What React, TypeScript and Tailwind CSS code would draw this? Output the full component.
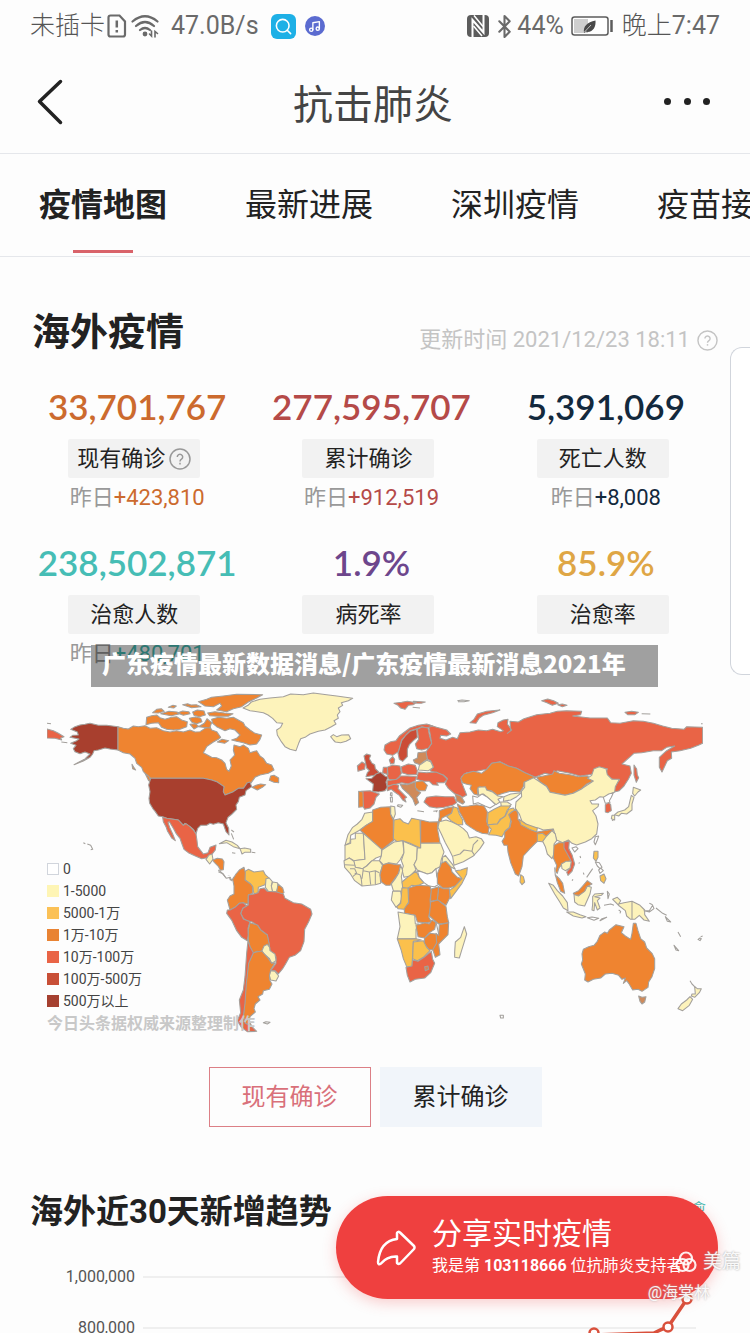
import type { ReactNode } from "react";
import { Bluetooth, Music, Search } from "lucide-react";

const stats = [
  { value: "33,701,767", label: "现有确诊", delta: "+423,810", color: "text-[#cc6a2e]", help: true },
  { value: "277,595,707", label: "累计确诊", delta: "+912,519", color: "text-[#b54a48]" },
  { value: "5,391,069", label: "死亡人数", delta: "+8,008", color: "text-[#13293d]" },
  { value: "238,502,871", label: "治愈人数", delta: "+480,701", color: "text-[#46bdb5]" },
  { value: "1.9%", label: "病死率", color: "text-[#6d468c]" },
  { value: "85.9%", label: "治愈率", color: "text-[#dfa645]" },
];

const tabs = ["疫情地图", "最新进展", "深圳疫情", "疫苗接种"];

const legend = [
  { label: "0", color: "bg-white border border-gray-300" },
  { label: "1-5000", color: "bg-[#fef5b5]" },
  { label: "5000-1万", color: "bg-[#fbc156]" },
  { label: "1万-10万", color: "bg-[#e98333]" },
  { label: "10万-100万", color: "bg-[#e96446]" },
  { label: "100万-500万", color: "bg-[#c84f37]" },
  { label: "500万以上", color: "bg-[#a54030]" },
];

const W = "#ffffff";
const Y = "#fdf3bb";
const G = "#fbc04c";
const O = "#ef8430";
const R = "#e96446";
const D = "#cb4c36";
const B = "#a83f2e";
const T = "#cf8a5a";

type Shape = [string, string];

const northAmerica: Shape[] = [
  [B, "M122 148L135 140 150 135 165 133 180 130 205 136 230 136 264 140V210L240 207 225 204 205 210 192 212 188 222 180 232 160 243 132 254 165 237 180 222 165 216 150 221 135 215 130 206 138 196 122 190 140 182 147 177 120 172 128 166 145 165 142 156Z"],
  [R, "M51 147L70 152 85 160 102 170 92 174 95 180 75 175 51 174Z"],
  [O, "M264 140L280 145 295 147 310 138 325 140 345 137 360 145 380 143 400 152 420 156 440 152 460 156 480 150 495 156 510 155 525 145 540 140 545 150 560 155 572 172 565 178 550 186 530 200 520 218 545 232 560 233 575 240 585 250 590 268 597 274 604 258 600 240 614 225 610 210 612 195 630 200 640 195 655 205 660 218 680 212 690 228 700 235 710 250 725 255 732 270 715 280 690 285 675 292 662 310 640 325 625 325 610 335 585 345 578 335 582 320 560 305 545 300 520 295H362L340 275 335 262 320 250 315 235 300 222 280 218 264 210Z"],
  [O, "M545 118L565 112 590 115 610 112 640 128 645 138 660 150 675 160 695 165 690 178 680 192 660 195 640 188 620 184 605 180 620 175 630 165 615 150 600 146 585 152 560 140 548 130Z"],
  [O, "M505 65L530 58 545 52 580 48 620 43 698 44 680 54 655 66 635 80 610 86 590 95 560 90 575 78 570 70 550 80 525 78Z"],
  [O, "M350 112L365 107 380 105 390 113 405 118 425 112 440 110 455 120 472 125 470 140 450 148 430 150 410 148 395 142 385 128 365 130 348 134Z"],
  [O, "M368 98l12-10 14-2 9 8-18 5z M392 101l25-7 24 2 10 5-28 6z M415 82l14-6 10 2-8 6z M458 74l15-3 10 4 16-1 14 6-28 3z M442 99l16-6 18 2 4 6-20 5z M488 96l14-6 20 3 4 12-18 5-16-4z M478 115l18-4 16 4 4 10-16 6-14-4z M533 99l22-4 28 4 26 2-14 8-32 0-24-2z M480 133l16-2 10 8-14 8z M505 140l18-10 8-14 14 12-6 16z M562 186l14-8 20 4-12 8z"],
  [O, "M722 288l10-2 14 8 0 14-14-1-14-6z M666 322l12-6 14-4 15 2-10 8-15 8z M345 280l12 10 7 14-8-2z M306 253l6 10 5 7-9-4z"],
  [B, "M362 295H520L545 300 560 305 582 320 580 335 585 345 610 335 625 325 640 325 652 308 660 306 665 320 648 332 645 345 628 352 625 365 618 375 620 388 606 402 594 412 588 428 596 445 597 465 588 455 580 432 565 428 550 433 540 430 530 436 512 436 503 445 498 462 490 448 480 440 465 430 460 436 445 420 410 415 398 410 385 408 376 395 368 385 359 370 357 355 360 335 356 315Z"],
  [R, "M398 412L410 415 445 420 460 436 468 431 480 440 490 450 498 462 501 482 503 500 520 522 534 518 540 502 558 495 556 510 545 524 538 533 528 534 515 536 496 528 475 518 462 508 456 492 450 475 438 460 430 445 418 425 414 427 420 445 428 462 436 482 425 474 412 452 408 440 400 425Z"],
  [Y, "M528 538l8-12 10-4 3 16-10 14z"],
  [O, "M548 540l14-5 15 2 5 8-2 24-9 2-6-12-12-12z"],
  [W, "M565 570l10 8 10 12 12-2 4 12 10-8 10 4"],
  [Y, "M568 491l20-10 18 5 16 10 8 10-20-6-20-12z M630 506l14-2 18 4 0 9-18 0-8 5z"],
  [W, "M606 518l10 2 M665 517l11 1 M604 450l8 6 M604 460l7 18 M160 488l6 3 M172 492l10 4 6 12-6 1 M51 130l12 1 M94 186l18 2"],
];

const southAmerica: Shape[] = [
  [W, "M565 65l14 6 10 14 12-3 4 10 8-10 6 4"],
  [G, "M642 66L655 58 672 66 700 62 706 74 718 85 708 92 705 104 685 112 684 128 672 132 668 110 660 102 645 90Z"],
  [O, "M642 52L646 68 645 90 662 102 668 110 668 130 655 135 654 163 640 158 628 160 615 172 600 180 596 165 592 150 600 138 612 132 612 108 608 88 618 72 628 60Z"],
  [Y, "M708 86L718 84 727 95 724 106 728 125 715 124 706 112Z"],
  [Y, "M728 96L742 98 745 106 740 124 728 125 724 108Z"],
  [O, "M744 102l14 12 4 14-10 6-12-8z"],
  [R, "M655 135L672 132 684 128 690 116 702 114 712 124 740 126 760 132 765 145 790 158 815 162 842 178 846 192 836 215 824 238 822 275 812 302 795 316 778 322 768 340 758 356 745 372 735 362 722 362 738 340 738 320 720 300 718 285 712 255 692 240 685 228 665 215 650 212 640 205 632 190 640 172 655 165Z"],
  [R, "M600 180L615 172 628 160 640 158 650 168 638 175 632 190 640 207 660 215 654 235 655 255 652 272 635 262 620 242 606 212 590 190 592 180Z"],
  [O, "M660 218L682 225 692 240 712 255 718 285 702 290 695 305 680 304 670 310 660 290 655 272 655 240Z"],
  [Y, "M702 288L712 283 719 292 720 302 735 312 738 332 725 340 718 325 702 312 696 302Z"],
  [Y, "M722 362L735 364 746 378 738 393 722 390 718 376Z"],
  [O, "M670 308L695 303 715 325 725 340 735 338 722 360 718 378 720 392 726 402 718 418 700 422 698 432 684 440 690 450 676 462 672 476 676 486 660 500 658 514 664 526 648 522 640 500 644 460 648 400 655 340Z"],
  [R, "M654 272L660 290 670 308 656 340 649 400 645 460 640 500 646 520 664 528 680 544 652 545 634 532 622 512 632 488 628 450 640 420 645 380 650 310Z"],
  [W, "M700 518l8-3 12 2-8 5z"],
];

const eurasia: Shape[] = [
  [Y, "M-81 84L-66 76-56 66-30 58 0 54 40 50 62 42 100 44 130 39 170 44 200 48 248 55 235 62 214 68 218 76 205 84 210 95 202 105 205 115 192 122 198 132 184 140 165 150 145 154 120 162 105 172 92 176 86 190 78 212 60 208 45 200 34 185 22 165 20 150 32 142 38 130 20 128 8 115-6 105-20 98-60 92Z"],
  [Y, "M182 170L190 164 200 170 215 165 236 164 242 176 228 184 212 188 196 186 190 180Z"],
  [R, "M372 70L395 67 412 64 440 68 430 74 415 76 405 88 392 84 384 76Z M430 64l36 2-12 4-24-1z"],
  [R, "M600 128L612 118 622 102 650 94 690 90 668 98 640 106 628 114 618 130Z"],
  [R, "M475 134L500 142 530 150 542 162 530 168 512 166 510 175 528 180 548 172 562 176 570 158 600 156 625 150 650 152 668 148 692 155 700 152 682 140 684 128 700 120 714 118 712 132 725 150 712 160 722 152 720 124 745 126 762 116 800 104 840 100 862 94 890 92 935 94 932 104 908 108 960 114 1012 114 1022 128 1050 130 1090 122 1120 124 1150 130 1178 138 1205 145 1242 148 1250 140 1298 142V190L1285 196 1262 205 1230 212 1204 216 1205 235 1192 242 1176 276 1168 262 1168 232 1190 212 1214 198 1190 202 1175 212 1150 212 1115 218 1092 220 1075 235 1056 252 1080 258 1084 280 1075 298 1062 318 1048 332 1033 336 1030 325 1048 300 1028 298 1008 285 1012 266 985 262 975 280 958 284 930 288 900 280 862 272 845 284 825 280 795 292 765 278 740 265 715 258 690 245 665 250 650 268 620 274 590 278 575 290 574 305 590 345 578 352 555 342 535 325 526 312 532 295 520 285 498 278 480 272 490 260 482 242 472 238 468 216 485 190 480 160Z"],
  [R, "M1092 255l8 12 2 18 4 8-7 14-7-22z M815 62l18-5 18 5 14 8-18 6-16-8z M863 74l14-2 14 4-14 4z M1065 97l20-3 20 3-10 7-22 0z"],
  [W, "M1115 101l26 1 M1293 131l5 0 M562 62l14-2 22 2-16 3-18 0 M428 82l22 2"],
  [R, "M345 195L362 185 378 182 388 168 404 156 420 144 445 136 470 132 488 138 470 144 456 140 440 146 420 152 408 165 395 180 390 200 385 215 368 226 350 222 342 210Z"],
  [D, "M408 165L420 154 440 148 442 172 430 182 418 194 412 208 412 230 398 244 388 238 384 220 390 200 395 182Z"],
  [R, "M442 148L456 141 474 144 478 165 485 190 475 205 455 210 440 206 436 192 446 178Z"],
  [T, "M444 218L468 215 472 238 462 244 450 254 434 248 430 240 442 234Z"],
  [Y, "M448 256L470 241 482 245 490 262 475 272 445 270Z"],
  [D, "M282 228l8-6 12 4-4 10 8 14 8 4 2 12 10 10-4 8-34 6 4-12 6-6-8-8z"],
  [R, "M262 258l14-12 10 6-2 16-20 6z"],
  [B, "M288 296L305 295 318 282 332 277 345 288 354 292 348 306 352 322 345 332 325 336 308 334 310 312Z"],
  [R, "M272 334L300 332 328 342 318 352 312 372 300 384 284 388 280 380Z"],
  [O, "M266 334L279 336 280 380 266 382Z"],
  [R, "M352 262L368 255 390 258 394 280 388 290 378 300 356 298 352 288Z M340 262l12 0 2 22-16-6z"],
  [R, "M394 260L415 252 436 256 442 272 440 284 415 284 396 278Z"],
  [R, "M445 276L470 278 498 276 520 286 532 298 522 308 500 308 505 316 488 314 478 304 458 304 440 298Z"],
  [R, "M352 302L380 298 392 288 412 288 440 290 436 302 415 312 395 308 372 314 352 318Z"],
  [R, "M352 320L372 313 386 316 384 326 396 338 410 352 404 356 408 366 398 360 388 346 374 336 364 328 352 332Z"],
  [T, "M390 312L412 314 436 306 440 330 452 338 440 352 446 368 436 376 428 356 416 342 398 326Z"],
  [O, "M436 306L458 302 472 316 466 332 446 332 436 322Z"],
  [R, "M462 366L470 352 498 348 525 350 552 350 560 368 548 376 522 382 500 384 478 380Z"],
  [T, "M556 342L572 348 584 366 578 372 560 362Z"],
  [R, "M358 240l10-10 6 8-2 12-10 2z"],
  [W, "M362 338l4 0 0 10-5-2z M361 352l6 0 0 14-5 0z M384 374l14 2-6 6-10-4z M442 392l20 3 M490 394l12-2-4 4"],
  [O, "M572 295L582 282 610 274 635 280 650 268 665 250 690 246 715 258 740 265 765 278 796 292 780 305 762 306 760 320 750 336 720 334 700 340 682 346 664 332 648 330 630 320 622 328 624 346 612 342 600 326 604 316 588 312 578 308Z"],
  [Y, "M624 322L646 320 650 330 668 336 684 348 700 350 684 358 690 366 678 374 664 362 650 350 640 342 626 346Z"],
  [Y, "M702 350L722 342 755 338 740 350 722 360 700 364Z"],
  [W, "M608 348L622 352 636 342 650 350 664 362 676 374 660 384 645 378 624 368 610 372Z"],
  [Y, "M692 366l20 0 12 8-8 6-22 0z"],
  [O, "M562 372L575 380 596 378 620 374 642 378 652 396 650 425 658 440 654 462 636 460 618 452 602 442 588 432 578 412 568 395Z"],
  [G, "M654 398L672 388 692 378 722 378 712 390 704 410 690 418 682 432 652 434Z"],
  [G, "M652 434L682 432 692 418 706 408 716 388 730 384 742 402 722 422 718 442 706 452 696 470 678 466 656 464 664 448Z"],
  [G, "M530 410L545 398 550 380 562 384 568 402 578 420 578 434 562 434 545 424Z"],
  [O, "M508 392l22-8 20-4-6 20-28 14-6 20-6-2 4-22z"],
  [Y, "M508 425L528 420 546 426 566 436 580 446 592 458 598 474 618 470 634 476 642 488 630 506 610 528 580 545 552 556 548 530 538 510 526 488 514 462 504 442Z"],
  ["none", "M550 528l20-6 12-12 24 4 4-20 14-14 M606 514l8 12"],
];

const africa: Shape[] = [
  [Y, "M104-20L128-24 128 4 108 16 90 30 62 46 60 68 45 76 54 44 68 22 82 12 96-2Z"],
  [O, "M128-30L152-38 180-40 182-18 190 0 190 52 192 60 155 90 90 30 108 16 128 4Z"],
  [Y, "M182-42L194-40 196-18 190-2 182-18Z"],
  [G, "M192 0L210-4 220 6 235 12 245-5 270 0 272 85 240 70 218 62 202 66 190 56Z"],
  [O, "M272 0L298 6 325 5 322 24 330 68 272 70Z"],
  [Y, "M45 76L62 70 62 58 76 56 76 40 100 40 105 118 72 122 58 114 45 122Z"],
  [Y, "M100 40L155 88 154 108 138 114 122 126 110 138 98 146 76 142 70 122 105 118Z"],
  [Y, "M156 90L192 66 218 62 222 98 210 120 200 132 176 128 160 134 148 122 154 108Z"],
  [Y, "M220 64L262 82 260 120 252 134 258 150 240 168 222 172 216 150 220 138 214 122 222 98Z"],
  [Y, "M272 70H332L342 96 334 118 330 140 318 146 306 158 292 162 276 156 262 150 252 134 260 118 262 84H272Z"],
  [Y, "M42 122L58 114 72 124 76 142 98 146 110 138 126 122 148 122 158 136 150 160 152 190 136 194 96 198 74 182 60 160 44 142Z"],
  ["none", "M44 134l30 2 M60 146l14 0 6 14-12 10 M74 160l16 4 4 14 2 20 M100 146l-4 30 M100 152l18 4 4 38 M118 156l18-4 0 42 M136 152l12 6"],
  [O, "M158 134L176 130 200 134 212 134 206 160 194 176 180 196 168 196 154 186 150 165Z"],
  [Y, "M212 136L218 152 214 170 218 196 216 214 190 212 184 192 196 176 206 160Z"],
  [G, "M216 186L232 172 258 154 268 172 282 188 262 198 245 196 232 206 218 202Z"],
  [W, "M262 152L276 156 292 162 306 158 318 146 320 168 328 192 314 200 296 198 282 188 268 172Z"],
  [O, "M334 130L346 122 362 140 366 156 382 172 396 176 376 198 356 204 338 204 322 190 322 162Z"],
  [Y, "M338 112L346 106 368 134 376 148 362 140 348 124 336 128Z"],
  [G, "M376 152L392 150 412 143 410 162 396 190 380 212 362 236 358 212 376 198 396 176Z"],
  [O, "M326 200L340 206 358 206 360 232 348 256 322 240Z"],
  [O, "M302 208L326 200 322 240 302 244Z"],
  [O, "M236 204L262 196 300 198 304 212 300 240 302 262 296 290 304 306 286 308 262 306 256 286 224 280 222 262 236 250Z"],
  [Y, "M188 214L212 214 216 236 210 250 198 262 184 240Z"],
  [G, "M216 204L234 204 236 246 222 268 204 266 200 260 212 250Z"],
  [Y, "M204 276L224 280 254 286 256 312 266 312 258 328 258 356 202 356 210 320Z"],
  [O, "M258 316L286 308 298 312 306 300 318 308 314 328 298 338 284 354 264 350Z"],
  [O, "M302 246L324 240 348 260 352 290 356 308 326 312 312 300 298 288Z"],
  [O, "M328 314L356 308 354 344 336 362 326 372 330 404 316 412 308 388 320 368 318 340 326 346Z"],
  [O, "M284 354L300 340 318 342 320 368 308 390 296 388 282 370Z"],
  [G, "M202 357L258 356 274 360 250 364 246 440 230 440 220 416 214 392Z"],
  [G, "M250 366L280 362 290 382 300 392 280 412 262 422 248 416Z"],
  [R, "M228 442L246 438 248 420 264 424 282 412 304 394 308 418 314 430 302 458 284 474 256 478 240 486 232 466Z"],
  [T, "M284 440l10-2 2 10-10 4z"],
  [Y, "M403 320L410 342 404 362 394 394 388 414 374 412 374 396 376 366 392 352Z"],
  ["none", "M318 306l8 36"],
  [W, "M510 586l10 0 0 8-8 0z"],
];

const asia: Shape[] = [
  [O, "M140 292L160 288 188 282 192 272 208 280 240 284 265 290 292 288 310 303 290 312 275 326 248 340 225 345 180 336 170 318 150 306Z"],
  [Y, "M130 293L150 306 170 320 180 337 225 346 250 340 276 326 310 303 292 295 305 286 312 266 328 260 348 266 352 284 366 298 388 298 376 320 374 336 355 345 342 352 330 350 316 360 300 362 306 372 326 372 324 380 308 392 318 408 324 432 320 462 305 476 286 486 260 495 246 490 235 480 218 488 200 480 195 464 190 447 160 450 145 444 120 440 96 424 88 402 76 385 78 366 95 350 94 334 104 322 104 306Z"],
  [W, "M340 352l16-10 14-4-6 14-6 10 2 6-14 2z"],
  [R, "M346 374l10-6 6 6 2 18-10 6-8-2z"],
  [Y, "M430 322l12 4 10 4-8 6-10 12-6-8z M424 346l8 6-6 20 0 18-16 12-16-2-8 8-12-4 10-8 20-6 12-10 4-18z M366 406l8 0 0 14-10-4z"],
  [O, "M65 396L78 388 84 402 84 418 96 430 118 446 142 456 162 452 190 448 186 458 172 466 168 482 154 476 138 488 120 506 100 528 96 560 86 588 76 582 62 548 54 516 52 496 42 496 36 484 44 472 44 456 60 442 64 424 56 404Z"],
  [G, "M88 418L108 432 142 444 140 456 118 448 92 434Z M142 462l16-2 12 10-6 16-22-2z M92 584l8 6 4 16-8 8-6-8z"],
  [Y, "M186 452L196 462 200 482 192 492 196 512 186 536 172 522 166 500 158 484 170 468Z"],
  [O, "M192 496L206 488 220 488 236 482 234 500 242 520 246 540 216 552 206 566 202 580 196 574 200 556 190 534Z"],
  [R, "M222 486L238 484 236 506 246 524 254 552 246 574 234 586 230 576 242 562 242 540 230 518 222 504Z"],
  [Y, "M214 552l14-8 16 0-4 20-14 8-10-6z"],
  [W, "M246 504l12-4 6 6-10 10z M316 470l10-2-4 12-6 14-4-8z"],
];

const oceania: Shape[] = [
  [O, "M136 164L148 176 158 190 164 220 152 214 142 188Z"],
  [W, "M134 142l2 24 4 4 M210 108l2 6 M206 130l3-2 M220 158l2 6 M186 182l3-4"],
  [Y, "M116 190L130 196 142 212 158 228 172 248 174 272 160 264 148 244 134 222Z"],
  [Y, "M170 276L190 276 210 284 228 290 216 294 190 288Z"],
  [Y, "M192 222L205 228 226 210 232 198 244 202 240 222 232 240 224 258 204 254 194 246Z"],
  [O, "M190 220L206 212 218 198 232 182 246 192 230 200 224 214 206 226 194 224Z"],
  [Y, "M248 230l6-8 26-2-6 6-20 4 16 4-8 8 8 22-8 6-8-22-2 24-6-2 2-18z"],
  [Y, "M308 238L322 232 332 242 326 252 342 248 366 244 390 256 404 270 404 284 418 304 402 300 388 286 374 298 362 298 350 288 346 272 328 258Z"],
  ["none", "M366 244V298"],
  [G, "M252 94l12 0 0 18-6 12-8-10z M270 168l12-6 6 14-6 14-10-8z"],
  [W, "M256 126l12 2 8 14-6 4-8-8z M266 150l6-6 8 8-10 8z M230 172l18-26 M232 293l14-2 20 4-14 6z M270 302l20-10-14 4z M282 256l20-4 10 4 M292 214l6 8-4 14z M326 270l6 4-2 6 M402 272l16 0 10-16 4 10-14 10z M418 250l10 4 M438 264l20 16 12 6 M466 290l16 16-10-2z M504 336l8 14 M492 376l14 16-8-2z M564 358l6-4 4 2-4 6z M572 350l6-2"],
  [O, "M220 388L236 380 252 376 262 364 270 346 284 336 292 340 298 330 318 314 342 320 334 338 346 348 362 358 366 340 370 310 378 310 384 332 392 356 404 366 410 384 426 400 434 416 434 446 426 470 416 486 414 502 396 514 384 508 368 510 356 490 350 482 340 490 346 474 336 478 326 466 306 460 286 462 272 474 250 478 234 486 224 480 226 462 214 432 218 420 216 402Z"],
  [T, "M386 528l10 4 12-2-4 16-8 6-6-8z"],
  [Y, "M554 500l8 6 12 0-6 12-14 14-10-4 2-6 10 0z M540 530l8 8-10 18-20 16-14-6 10-14 16-12z"],
  [W, "M540 482l6 10 10 10 M306 0l4 2"],
];

function Region({ x, y, shapes }: { x: number; y: number; shapes: Shape[] }) {
  return (
    <g transform={`translate(${x} ${y}) scale(0.33333)`} stroke="#a3a09c" strokeWidth="3.2" strokeLinejoin="round">
      {shapes.map(([fill, d]) => (
        <path key={d} d={d} fill={fill} />
      ))}
    </g>
  );
}

function WorldMap() {
  return (
    <svg viewBox="47 690 656 346" className="block w-full" role="img" aria-label="海外疫情地图">
      <Region x={30} y={680} shapes={northAmerica} />
      <Region x={30} y={850} shapes={southAmerica} />
      <Region x={330} y={820} shapes={africa} />
      <Region x={270} y={680} shapes={eurasia} />
      <Region x={490} y={680} shapes={asia} />
      <Region x={510} y={820} shapes={oceania} />
    </svg>
  );
}

function HelpIcon({ className }: { className: string }) {
  return (
    <svg viewBox="0 0 22 22" className={className} fill="none" stroke="currentColor" strokeWidth="1.5">
      <circle cx="11" cy="11" r="10" />
      <path d="M8.3 9a2.7 2.7 0 1 1 4.2 2.2c-.9.6-1.5 1.1-1.5 2.2" />
      <path d="M11 14.8v1.6" />
    </svg>
  );
}

function StatusBar() {
  return (
    <div className="flex h-[52px] items-center justify-between px-[30px] text-[25px] leading-[52px] text-[#6a6a6a]">
      <div className="flex items-center">
        <span className="font-light text-[#555]">未插卡</span>
        <svg viewBox="0 0 20 24" className="ml-[2px] h-6 w-5" fill="none" stroke="currentColor" strokeWidth="2.2">
          <path d="M3.5 1.5h9l5.5 6v13q0 2-2 2H3.5q-2 0-2-2V3.5q0-2 2-2Z" />
          <path d="M9.8 6.5v7M9.8 16v2.5" strokeWidth="2.5" />
        </svg>
        <svg viewBox="0 0 28 24" className="ml-1 h-6 w-7" fill="none" stroke="currentColor" strokeWidth="2.2" strokeLinecap="round">
          <path d="M1.5 7.5Q14-3 26.5 7.5M5 12q9-8 18 0M9 16q5-4 10 0" />
          <circle cx="14" cy="20" r="1.3" fill="currentColor" />
          <path d="M20.5 17v5l-2-2M24 23v-5.5l2.5 2" strokeWidth="1.6" />
        </svg>
        <span className="ml-3">47.0B/s</span>
        <span className="ml-3 flex h-[25px] w-[25px] items-center justify-center rounded-md bg-[#1eb0e6] text-white">
          <Search size={19} strokeWidth={2} />
        </span>
        <span className="ml-[9px] flex h-5 w-5 items-center justify-center rounded-full bg-[#5b6bd0] text-white">
          <Music size={13} strokeWidth={2.5} />
        </span>
      </div>
      <div className="flex items-center">
        <svg viewBox="0 0 24 24" className="h-6 w-6">
          <rect x="1" y="1" width="22" height="22" rx="4" fill="#5c5c5c" />
          <path d="M6.5 23V6L17.5 18.500V1" fill="none" stroke="#fff" strokeWidth="2" />
          <path d="M8 1.500l9 11M7.500 12l8.500 10" stroke="#fff" strokeWidth="1.500" />
        </svg>
        <Bluetooth size={25} strokeWidth={2} className="ml-[2px]" />
        <span>44%</span>
        <svg viewBox="0 0 42 20" className="ml-[7px] h-5 w-[42px]">
          <rect x="1" y="1" width="36" height="18" rx="2.5" fill="#fff" stroke="#5c5c5c" strokeWidth="1.5" />
          <path d="M3 3h14v14H3z" fill="#cfcfcf" />
          <path d="M13 17c-1-7 3-10.500 11.500-12.500.5 6.500-2 11-8 11.500-.7 0-1.200-.2-1.700-.500Z" fill="#4a4a4a" />
          <path d="M13.500 16l6.500-7" stroke="#ddd" strokeWidth="0.800" />
          <path d="M40.5 4v12" stroke="#5c5c5c" strokeWidth="2.5" />
        </svg>
        <span className="ml-[9px]">
          <span className="font-light text-[#555]">晚上</span>7:47
        </span>
      </div>
    </div>
  );
}

function Header() {
  return (
    <header className="flex h-[102px] items-center justify-between border-b border-gray-200 pr-10 pl-9">
      <button aria-label="返回" className="h-12 w-[50px] text-[#222]">
        <svg viewBox="0 0 50 48" fill="none" stroke="currentColor" strokeWidth="3.5" strokeLinecap="round" strokeLinejoin="round">
          <path d="M24.500 2.500 3.500 22.500l21 21" />
        </svg>
      </button>
      <h1 className="pt-[6px] text-[40px] leading-[60px] text-[#444]">抗击肺炎</h1>
      <button aria-label="更多" className="flex h-12 w-[50px] items-center justify-between pb-[2px] pl-1 text-[#222]">
        {[0, 1, 2].map((i) => (
          <span key={i} className="h-[7px] w-[7px] rounded-full bg-current" />
        ))}
      </button>
    </header>
  );
}

function Stat({ value, label, delta, color, help }: (typeof stats)[number]) {
  return (
    <div className="flex h-39 flex-col items-center">
      <div className={`h-[52px] pl-[6px] font-[Lato] text-[35px] leading-[39px] font-semibold ${color}`}>{value}</div>
      <div className="flex h-[39px] w-[132px] items-center justify-center gap-1 rounded-xs bg-[#f2f2f2] text-[22px] leading-8 text-[#222]">
        {label}
        {help && <HelpIcon className="h-[22px] w-[22px] text-[#999]" />}
      </div>
      {delta && (
        <div className="mt-1 pl-[6px] text-[22px] leading-8 text-[#999]">
          昨日<span className={color}>{delta}</span>
        </div>
      )}
    </div>
  );
}

function Watermark({ children }: { children: ReactNode }) {
  return <span className="text-[19px] leading-6 text-white/90 [text-shadow:0_0_2px_#999]">{children}</span>;
}

export default function App() {
  return (
    <div className="relative h-screen overflow-hidden bg-[#fdfdfd] font-[Roboto,'Noto_Sans_CJK_SC',sans-serif]">
      <StatusBar />
      <Header />

      <nav className="flex h-[103px] gap-[78px] overflow-hidden border-b border-gray-200 pl-[39px]">
        {tabs.map((tab, i) => (
          <a
            key={tab}
            href="#"
            className={
              i === 0
                ? "flex shrink-0 flex-col items-center text-[32px] leading-[102px] font-bold text-[#222]"
                : "shrink-0 text-[32px] leading-[102px] text-[#222]"
            }
          >
            {tab}
            {i === 0 && <span className="-mt-[6px] h-[3px] w-[60px] shrink-0 bg-[#d9636a]" />}
          </a>
        ))}
      </nav>

      <section>
        <div className="flex items-end justify-between pt-[47px] pr-8 pl-8">
          <h2 className="text-[38px] leading-[56px] font-bold text-[#222]">海外疫情</h2>
          <div className="flex items-center gap-[7px] pb-1 text-[22px] leading-8 text-[#c4c4c4]">
            更新时间 2021/12/23 18:11
            <HelpIcon className="h-[21px] w-[21px]" />
          </div>
        </div>

        <div className="mt-[27px] mr-[30px] ml-[17px] grid grid-cols-3">
          {stats.map((s) => (
            <Stat key={s.label} {...s} />
          ))}
        </div>

        <div className="relative -mt-[9px] mr-[47px] ml-[47px]">
          <WorldMap />
          <div className="absolute bottom-0 left-0">
            <ul className="text-[14px] leading-[22px] text-[#444]">
              {legend.map((item) => (
                <li key={item.label} className="flex items-center gap-1">
                  <span className={`h-3 w-3 ${item.color}`} />
                  {item.label}
                </li>
              ))}
            </ul>
            <p className="text-[16px] leading-6 font-bold text-[#c8c8c8]">今日头条据权威来源整理制作</p>
          </div>
        </div>

        <div className="mt-[31px] flex justify-center gap-[9px] text-[24px] leading-[58px]">
          <button className="h-[60px] w-[162px] border border-[#dc7f86] text-[#d9707a]">现有确诊</button>
          <button className="h-[60px] w-[162px] bg-[#f1f5fa] text-[#222]">累计确诊</button>
        </div>
      </section>

      <section className="mt-[60px]">
        <div className="flex items-start justify-between pr-[44px] pl-[30px]">
          <h2 className="text-[33px] leading-[50px] font-bold text-[#222]">海外近30天新增趋势</h2>
          <span className="text-[15px] leading-11 text-[#46bdb5]">治愈</span>
        </div>
        <div className="mt-[27px] mr-[54px] ml-[54px] text-[16px] leading-[26px] text-[#555]">
          {["1,000,000", "800,000"].map((tick) => (
            <div key={tick} className="mb-[25px] flex items-center gap-2">
              <span className="w-[81px] text-right">{tick}</span>
              <span className="h-[2px] flex-1 bg-[#efefef]" />
            </div>
          ))}
        </div>
      </section>

      <div className="absolute top-[645px] right-[92px] left-[91px] h-[42px] bg-black/37 pl-[11px] font-['Noto_Sans_CJK_SC',sans-serif] text-[24px] leading-9 font-black whitespace-nowrap text-white">
        广东疫情最新数据消息/广东疫情最新消息2021年
      </div>

      <div className="absolute top-[347px] right-0 h-[328px] w-5 rounded-l-xl border border-r-0 border-gray-300 bg-white" />

      <button className="absolute right-8 bottom-[34px] flex h-[103px] w-[382px] items-center rounded-full bg-[#ef403f] pl-10 text-left text-white shadow-[0_4px_14px_rgba(239,64,63,0.25)]">
        <svg viewBox="0 0 40 36" className="h-9 w-10" fill="none" stroke="currentColor" strokeWidth="2.5" strokeLinejoin="round">
          <path d="M21 3q1-2 3-.5L38 16q1 1.5 0 3L24 33.500q-2 1-3-.5v-6.500Q11 26 5 33.500q-3 2-3-1.500Q4 11 21 9Z" />
        </svg>
        <span className="ml-4 whitespace-nowrap">
          <span className="block text-[30px] leading-9">分享实时疫情</span>
          <span className="block text-[16px] leading-7">
            我是第 <b>103118666</b> 位抗肺炎支持者
          </span>
        </span>
      </button>

      <svg viewBox="0 0 130 40" className="absolute right-[50px] bottom-0 h-10 w-[130px]" fill="none" stroke="#d9503c" strokeWidth="3.5">
        <path d="M24 42 84 40Q92 36 98 34L117 6" />
        <g fill="#fff" strokeWidth="2.5">
          <circle cx="24" cy="40" r="4.500" />
          <circle cx="98" cy="34" r="4.500" />
          <circle cx="117" cy="6" r="4.500" />
        </g>
      </svg>

      <div className="absolute right-[9px] bottom-[59px] flex items-center gap-[6px]">
        <svg viewBox="0 0 22 22" className="h-[22px] w-[22px]" fill="none" stroke="#fff" strokeWidth="2.2" strokeOpacity="0.9">
          <circle cx="11" cy="7.500" r="6" />
          <circle cx="7.500" cy="14" r="6" />
          <circle cx="14.500" cy="14" r="6" />
        </svg>
        <Watermark>美篇</Watermark>
      </div>
      <div className="absolute right-10 bottom-7 text-[16px] leading-6 text-white/90 [text-shadow:0_0_2px_#aaa]">@海棠林</div>
    </div>
  );
}
